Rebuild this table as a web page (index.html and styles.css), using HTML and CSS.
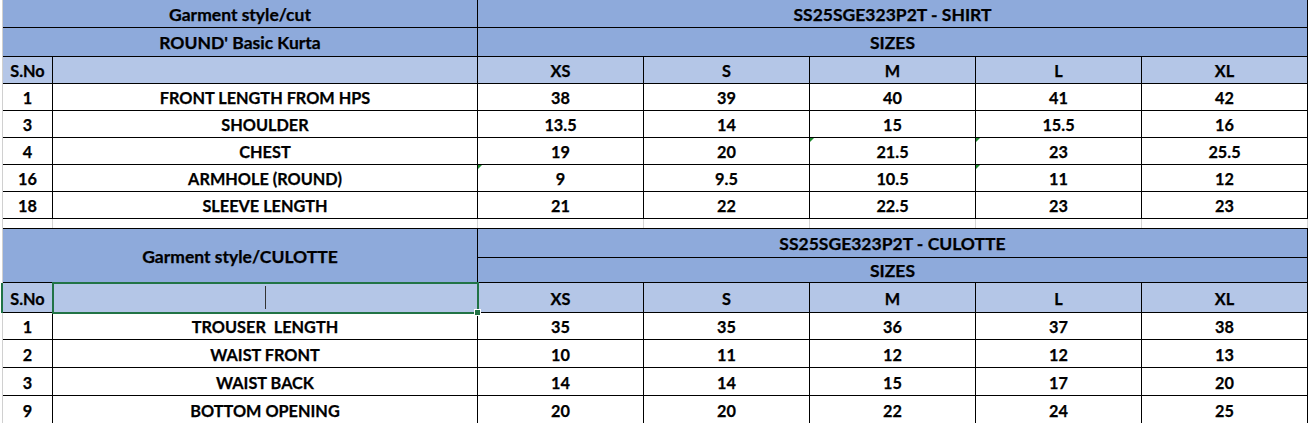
FILE: index.html
```html
<!DOCTYPE html>
<html>
<head>
<meta charset="utf-8">
<link rel="stylesheet" href="styles.css">
</head>
<body>
<div class="sheet">
  <div class="grid grid-top">
    <div class="c hd span2">Garment style/cut</div>
    <div class="c hd span5">SS25SGE323P2T - SHIRT</div>
    <div class="c hd span2">ROUND' Basic Kurta</div>
    <div class="c hd span5">SIZES</div>
    <div class="c sub">S.No</div>
    <div class="c sub"></div>
    <div class="c sub">XS</div>
    <div class="c sub">S</div>
    <div class="c sub">M</div>
    <div class="c sub">L</div>
    <div class="c sub">XL</div>

    <div class="c">1</div><div class="c">FRONT LENGTH FROM HPS</div><div class="c">38</div><div class="c">39</div><div class="c">40</div><div class="c">41</div><div class="c">42</div>
    <div class="c">3</div><div class="c">SHOULDER</div><div class="c">13.5</div><div class="c">14</div><div class="c">15</div><div class="c">15.5</div><div class="c">16</div>
    <div class="c">4</div><div class="c">CHEST</div><div class="c">19</div><div class="c">20</div><div class="c flag">21.5</div><div class="c flag">23</div><div class="c">25.5</div>
    <div class="c">16</div><div class="c">ARMHOLE (ROUND)</div><div class="c flag">9</div><div class="c">9.5</div><div class="c">10.5</div><div class="c flag">11</div><div class="c">12</div>
    <div class="c">18</div><div class="c">SLEEVE LENGTH</div><div class="c">21</div><div class="c">22</div><div class="c">22.5</div><div class="c">23</div><div class="c">23</div>

    <div class="c gap"></div><div class="c gap"></div><div class="c gap"></div><div class="c gap"></div><div class="c gap"></div><div class="c gap"></div><div class="c gap"></div>
  </div>

  <div class="grid grid-bottom">
    <div class="c hd span2 tall">Garment style/CULOTTE</div>
    <div class="c hd span5">SS25SGE323P2T - CULOTTE</div>
    <div class="c hd span5">SIZES</div>
    <div class="c sub sno-sel">S.No</div>
    <div class="c sub selected"><span class="caret"></span><span class="handle"></span></div>
    <div class="c sub">XS</div>
    <div class="c sub">S</div>
    <div class="c sub">M</div>
    <div class="c sub">L</div>
    <div class="c sub">XL</div>

    <div class="c">1</div><div class="c">TROUSER&nbsp; LENGTH</div><div class="c">35</div><div class="c">35</div><div class="c">36</div><div class="c">37</div><div class="c">38</div>
    <div class="c">2</div><div class="c">WAIST FRONT</div><div class="c">10</div><div class="c">11</div><div class="c">12</div><div class="c">12</div><div class="c">13</div>
    <div class="c">3</div><div class="c">WAIST BACK</div><div class="c">14</div><div class="c">14</div><div class="c">15</div><div class="c">17</div><div class="c">20</div>
    <div class="c">9</div><div class="c">BOTTOM OPENING</div><div class="c">20</div><div class="c">20</div><div class="c">22</div><div class="c">24</div><div class="c">25</div>
  </div>
</div>
</body>
</html>
```

FILE: styles.css
```css
html, body {
  margin: 0;
  padding: 0;
  background: #ffffff;
}

body {
  width: 1310px;
  height: 423px;
  overflow: hidden;
  font-family: Lato, "Open Sans", sans-serif;
  font-weight: 700;
  font-size: 16.3px;
  color: #000000;
}

.sheet {
  margin-left: 2px;
  border-left: 1px solid #d0d0d0;
  width: 1305px;
}

.grid {
  display: grid;
  grid-template-columns: 50px 425px repeat(5, 166px);
}

.grid-top {
  grid-template-rows: 28px 29px 27px 27px 27px 27px 27px 27px 9px;
}

.grid-bottom {
  border-top: 1px solid #000000;
  grid-template-rows: 29px 25px 30px 27px 28px 28px 28px;
}

.c {
  box-sizing: border-box;
  border-right: 1px solid #000000;
  border-bottom: 1px solid #000000;
  display: flex;
  align-items: center;
  justify-content: center;
  white-space: nowrap;
  position: relative;
  padding-top: 1px;
  -webkit-text-stroke: 0.25px #000000;
}

.hd {
  background: #8eaadb;
  font-size: 17.5px;
}

.sub {
  background: #b4c6e7;
}

.span2 {
  grid-column: span 2;
}

.span5 {
  grid-column: span 5;
}

.tall {
  grid-row: span 2;
}

.gap {
  border-bottom: none;
  border-right: 1px solid #d4d4d4;
}

.flag::before {
  content: "";
  position: absolute;
  left: 0;
  top: 0;
  width: 0;
  height: 0;
  border-top: 4px solid #1e8a2e;
  border-right: 4px solid transparent;
}

.selected {
  outline: 2px solid #217346;
  outline-offset: -1px;
  z-index: 2;
}

.sno-sel::before {
  content: "";
  position: absolute;
  left: -2px;
  top: 0;
  bottom: -1px;
  width: 2px;
  background: #217346;
}

.caret {
  position: absolute;
  left: 212px;
  top: 3px;
  height: 23px;
  width: 1px;
  background: #333333;
}

.handle {
  position: absolute;
  right: -4px;
  bottom: -4px;
  width: 5px;
  height: 5px;
  background: #217346;
  border: 1px solid #ffffff;
}
```
